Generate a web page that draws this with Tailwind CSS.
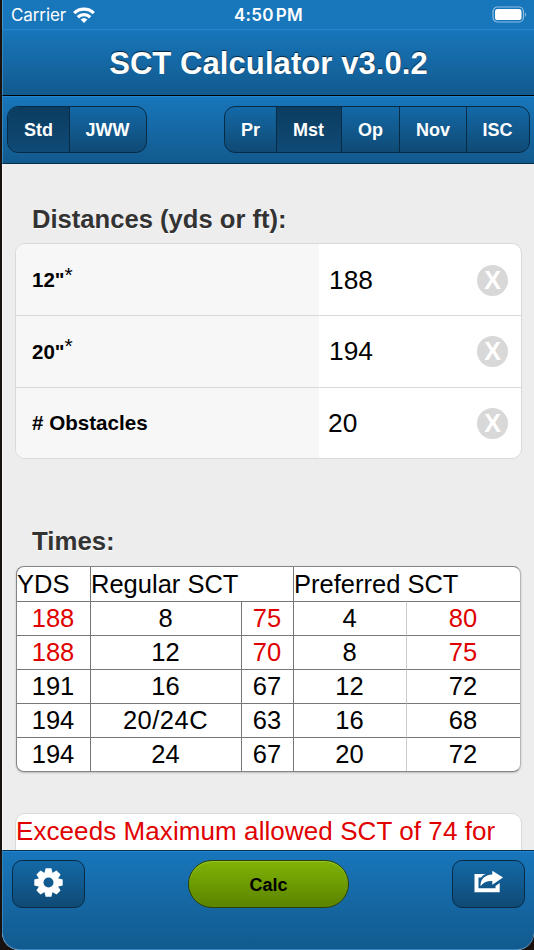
<!DOCTYPE html>
<html lang="en">
<head>
  <meta charset="UTF-8">
  <title>SCT Calculator</title>
  <script src="https://cdn.jsdelivr.net/npm/@tailwindcss/browser@4"></script>
</head>
<body class="bg-[#17120f] w-[534px] h-[950px] overflow-hidden pl-[2px] font-['Liberation_Sans',sans-serif] text-black">
<div class="flex flex-col h-[950px] bg-[#ededed] rounded-b-[17px] overflow-hidden">

  <!-- status bar -->
  <div class="h-[29px] shrink-0 bg-[#1876bb] border-l border-[#4b98d0] grid grid-cols-3 items-center pl-[8px] pr-[7px] text-white font-['Inter',sans-serif]">
    <div class="flex items-center gap-[7px] text-[17px] tracking-[-0.1px] pt-[2px]">
      <span>Carrier</span>
      <svg class="w-[22px] h-[16px] -mt-[2px]" viewBox="0 0 22 16" fill="none" stroke="#fff" stroke-width="3.3">
        <path d="M1.2 6.1a14.2 14.2 0 0 1 19.6 0"/>
        <path d="M4.8 10.2a9 9 0 0 1 12.4 0"/>
        <path d="M11 16 7.6 12.6a5 5 0 0 1 6.8 0z" fill="#fff" stroke="none"/>
      </svg>
    </div>
    <div class="text-center text-[17px] font-semibold tracking-[0.3px] whitespace-nowrap pt-[2px] pr-px [word-spacing:-2.5px]">4:50 PM</div>
    <svg class="w-[35px] h-[17px] justify-self-end" viewBox="0 0 35 17">
      <rect x="1" y="1" width="30.5" height="15" rx="4.5" fill="none" stroke="#8dbee2" stroke-width="1.2"/>
      <rect x="3" y="3" width="26.5" height="11" rx="2.6" fill="#fff"/>
      <path d="M33.2 6.2c1.4.7 1.4 3.9 0 4.6z" fill="#8dbee2"/>
    </svg>
  </div>

  <!-- title -->
  <header class="h-[67px] shrink-0 flex items-center justify-center pt-[4px] bg-linear-to-b from-[#1876bb] to-[#125a8e] border-t border-t-[#2187d3] border-b border-b-black border-l border-l-[#3985bc]">
    <h1 class="text-[31px] font-bold text-white tracking-[0.08px] [text-shadow:0_-1.5px_1px_#07243a]">SCT Calculator v3.0.2</h1>
  </header>

  <!-- class and level selectors -->
  <nav class="h-[68px] shrink-0 flex justify-between items-start pt-[9px] pl-[4px] pr-[4px] bg-linear-to-b from-[#1876bb] to-[#125a8e] border-t border-t-[#2187d3] border-b border-b-[#0a2f4a] border-l border-l-[#3985bc] text-white text-[18px] font-bold [text-shadow:0_-1px_1px_#07243a]">
    <div class="flex h-[47px] rounded-[11px] border border-[#072b45] overflow-hidden bg-linear-to-b from-[#1369a7] to-[#0f4a75]">
      <button class="w-[61px] pt-px bg-linear-to-b from-[#0b3d61] to-[#0f4a75]">Std</button>
      <button class="w-[77px] pt-px pr-px border-l border-[#072b45]">JWW</button>
    </div>
    <div class="flex h-[47px] rounded-[11px] border border-[#072b45] overflow-hidden bg-linear-to-b from-[#1369a7] to-[#0f4a75]">
      <button class="w-[51px] pt-px">Pr</button>
      <button class="w-[65px] pt-px pr-px border-l border-[#072b45] bg-linear-to-b from-[#0b3d61] to-[#0f4a75]">Mst</button>
      <button class="w-[58px] pt-px border-l border-[#072b45]">Op</button>
      <button class="w-[67px] pt-px border-l border-[#072b45]">Nov</button>
      <button class="w-[63px] pt-px pr-px border-l border-[#072b45]">ISC</button>
    </div>
  </nav>

  <main class="flex-1 min-h-0 overflow-hidden pl-[13px] pr-[12px] pt-[40px] border-l border-white/60">
    <h2 class="h-[39px] pl-[16px] text-[25.6px] leading-[31px] font-bold text-[#333] [text-shadow:0_1px_1px_#fff]">Distances (yds or ft):</h2>
    <div class="-ml-px w-[507px] h-[216px] rounded-[10px] border border-[#d9d9d9] bg-white overflow-hidden grid grid-rows-3">
      <div class="flex">
        <label class="w-[303px] bg-[#f7f7f7] flex items-center pt-[2px] pl-[16px] text-[20.5px] font-bold">12"<sup class="text-[21px] font-normal top-[-6px] leading-none">*</sup></label>
        <div class="flex-1 flex items-center justify-between pt-px pl-[10px] pr-[13px] text-[26.3px]"><span class="pt-px">188</span>
          <button class="size-[31px] rounded-full bg-[#d8d8d8] flex items-center justify-center text-white text-[25px] font-bold leading-none">X</button>
        </div>
      </div>
      <div class="flex border-t border-[#d9d9d9]">
        <label class="w-[303px] bg-[#f7f7f7] flex items-center pt-px pl-[16px] text-[20.5px] font-bold">20"<sup class="text-[21px] font-normal top-[-6px] leading-none">*</sup></label>
        <div class="flex-1 flex items-center justify-between pl-[10px] pr-[13px] text-[26.3px]"><span class="pt-px">194</span>
          <button class="size-[31px] rounded-full bg-[#d8d8d8] flex items-center justify-center text-white text-[25px] font-bold leading-none">X</button>
        </div>
      </div>
      <div class="flex border-t border-[#d9d9d9]">
        <label class="w-[303px] bg-[#f7f7f7] flex items-center pt-[2px] pl-[16px] text-[20.6px] font-bold"># Obstacles</label>
        <div class="flex-1 flex items-center justify-between pt-px pl-[9px] pr-[13px] text-[26.3px]"><span class="pt-px">20</span>
          <button class="size-[31px] rounded-full bg-[#d8d8d8] flex items-center justify-center text-white text-[25px] font-bold leading-none">X</button>
        </div>
      </div>
    </div>

    <h2 class="mt-[67px] h-[40px] pl-[16px] text-[25.8px] leading-[31px] font-bold text-[#333] [text-shadow:0_1px_1px_#fff]">Times:</h2>
    <div class="w-[505px] h-[206px] rounded-[8px] border border-[#858585] border-r-[#b5b5b5] bg-white overflow-hidden shadow-[0_1px_2px_#bbb]">
      <table class="w-[503px] table-fixed border-separate border-spacing-0 text-[25.5px] leading-[33px] text-center [&_td]:pr-px">
        <colgroup>
          <col class="w-[73px]"><col class="w-[151px]"><col class="w-[52px]"><col class="w-[113px]"><col class="w-[114px]">
        </colgroup>
        <tbody>
          <tr class="h-[34px] text-left">
            <td>YDS</td>
            <td colspan="2" class="border-l border-[#777]">Regular SCT</td>
            <td colspan="2" class="border-l border-[#777]">Preferred SCT</td>
          </tr>
          <tr class="h-[34px]">
            <td class="border-t border-[#777] text-[#e00000]">188</td>
            <td class="border-t border-l border-[#777]">8</td>
            <td class="border-t border-l border-[#777] text-[#e00000]">75</td>
            <td class="border-t border-l border-[#777]">4</td>
            <td class="border-t border-l border-t-[#777] border-l-[#ccc] text-[#e00000]">80</td>
          </tr>
          <tr class="h-[34px]">
            <td class="border-t border-[#777] text-[#e00000]">188</td>
            <td class="border-t border-l border-[#777]">12</td>
            <td class="border-t border-l border-[#777] text-[#e00000]">70</td>
            <td class="border-t border-l border-[#777]">8</td>
            <td class="border-t border-l border-t-[#777] border-l-[#ccc] text-[#e00000]">75</td>
          </tr>
          <tr class="h-[34px]">
            <td class="border-t border-[#777]">191</td>
            <td class="border-t border-l border-[#777]">16</td>
            <td class="border-t border-l border-[#777]">67</td>
            <td class="border-t border-l border-[#777]">12</td>
            <td class="border-t border-l border-t-[#777] border-l-[#ccc]">72</td>
          </tr>
          <tr class="h-[34px]">
            <td class="border-t border-[#777]">194</td>
            <td class="border-t border-l border-[#777] tracking-[0.5px]">20/24C</td>
            <td class="border-t border-l border-[#777]">63</td>
            <td class="border-t border-l border-[#777]">16</td>
            <td class="border-t border-l border-t-[#777] border-l-[#ccc]">68</td>
          </tr>
          <tr class="h-[34px]">
            <td class="border-t border-[#777]">194</td>
            <td class="border-t border-l border-[#777]">24</td>
            <td class="border-t border-l border-[#777]">67</td>
            <td class="border-t border-l border-[#777]">20</td>
            <td class="border-t border-l border-t-[#777] border-l-[#ccc]">72</td>
          </tr>
        </tbody>
      </table>
    </div>

    <!-- warning, cut off by the footer -->
    <div class="-ml-px mt-[41px] w-[507px] h-[80px] rounded-[10px] border border-[#d9d9d9] bg-white text-[#e00000] text-[26px] leading-[35px] tracking-[0.08px] whitespace-nowrap">Exceeds Maximum allowed SCT of 74 for</div>
  </main>

  <footer class="h-[100px] shrink-0 flex justify-between items-start pt-[8px] pl-[9px] pr-[9px] bg-linear-to-b from-[#1876bb] to-[#125a8e] border-t border-t-[#0a2f4a] border-b border-b-[#3985bc] border-l border-l-[#3985bc] rounded-b-[17px] shadow-[inset_0_1px_0_#2187d3]">
    <button class="w-[73px] h-[48px] mt-px rounded-[10px] border border-[#072b45] bg-linear-to-b from-[#1369a7] to-[#0f4a75] flex items-start justify-center pt-[7px]">
      <svg class="w-[29px] h-[29px]" viewBox="-14.5 -14.5 29 29">
        <g fill="#fff">
          <path id="tooth" d="M-4.2-9-2.9-14.2H2.9L4.2-9V9L2.9 14.2H-2.9L-4.2 9z"/>
          <use href="#tooth" transform="rotate(45)"/>
          <use href="#tooth" transform="rotate(90)"/>
          <use href="#tooth" transform="rotate(135)"/>
        </g>
        <circle r="5" fill="#125b90"/>
      </svg>
    </button>
    <button class="w-[161px] h-[48px] mt-px rounded-full border border-[#2b4208] bg-linear-to-b from-[#80b307] to-[#5b8400] text-[18px] font-bold pt-[2px] shadow-[inset_0_1px_0_#9ac42c]">Calc</button>
    <button class="w-[73px] h-[48px] mt-px rounded-[10px] border border-[#072b45] bg-linear-to-b from-[#1369a7] to-[#0f4a75] flex items-start justify-center pt-[9px]">
      <svg class="w-[29px] h-[23px]" viewBox="0 0 29 23" fill="#fff">
        <path d="M.5 4H11.5C9.5 5 8.2 6 7.2 7.5H4.5V18.3H21.5V16L25.7 13V22.3H.5z"/>
        <path d="M18.3.7 29 7.5 18.3 14.7V11C13 10.8 9 12.5 6.5 16.2C6.3 9 11 4.7 18.3 4.5z"/>
      </svg>
    </button>
  </footer>
</div>
</body>
</html>
